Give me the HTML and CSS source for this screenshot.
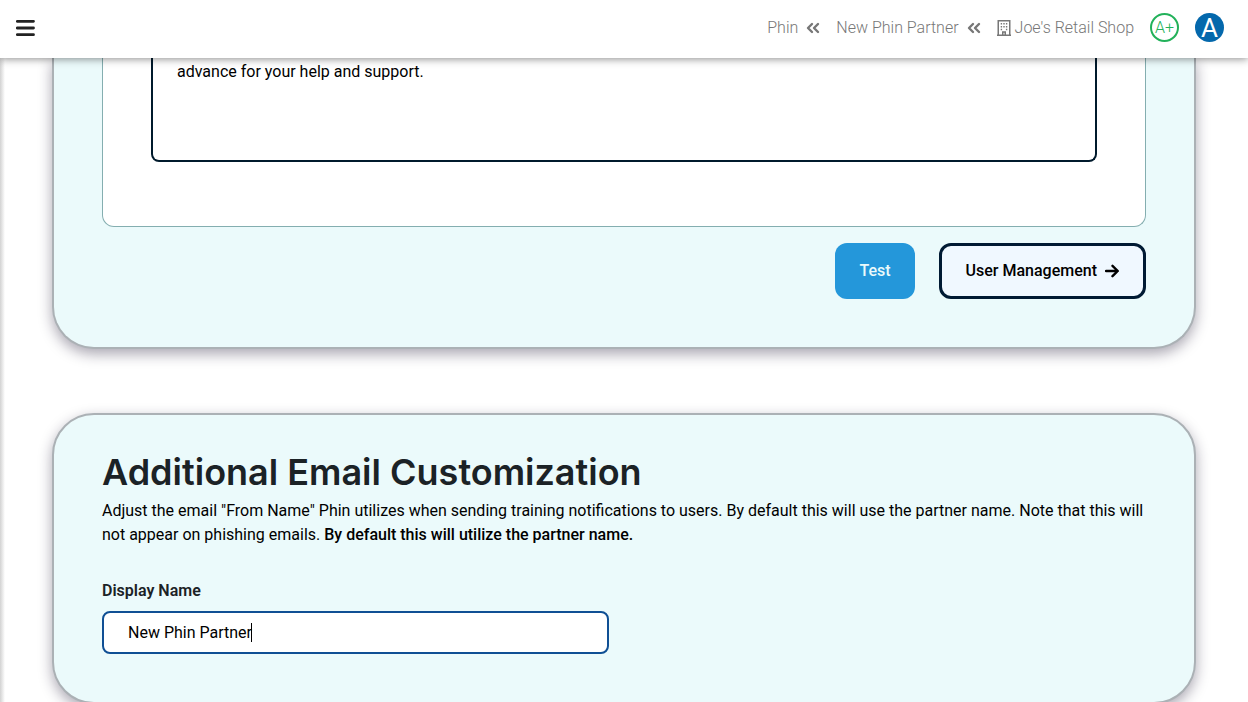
FILE: index.html
```html
<!DOCTYPE html>
<html lang="en">
<head>
    <meta charset="UTF-8">
    <meta name="viewport" content="width=device-width, initial-scale=1.0">
    <title>Joe's Retail Shop</title>
    <link rel="stylesheet" href="styles.css">
</head>
<body>
    <header class="topbar">
        <button class="menu-btn" type="button" aria-label="Menu">
            <svg width="20" height="18" viewBox="0 0 20 18"><path d="M1.300 2.300h16.200M1.300 9h16.200M1.300 15.700h16.200" stroke="#222" stroke-width="2.800" stroke-linecap="round"/></svg>
        </button>
        <nav class="breadcrumbs">
            <a href="#">Phin</a>
            <svg class="chevrons" width="14" height="12" viewBox="0 0 14 12"><path d="M6 2L2 6l4 4M12 2L8 6l4 4"/></svg>
            <a href="#">New Phin Partner</a>
            <svg class="chevrons" width="14" height="12" viewBox="0 0 14 12"><path d="M6 2L2 6l4 4M12 2L8 6l4 4"/></svg>
            <a class="company" href="#">
                <svg width="14" height="16" viewBox="0 0 14 16">
                    <path d="M0 15.250h14M1.250 15V.75h11.500V15M5.750 15v-3h2.500v3" fill="none" stroke="#777" stroke-width="1.500"/>
                    <path d="M3.700 3h1.400v1.500H3.700zM6.300 3h1.400v1.500H6.300zM8.900 3h1.400v1.500H8.900zM3.700 5.900h1.400v1.500H3.700zM6.300 5.900h1.400v1.500H6.300zM8.900 5.900h1.400v1.500H8.900zM3.700 8.800h1.400v1.500H3.700zM8.900 8.800h1.400v1.500H8.900z" fill="#777"/>
                </svg>
                Joe's Retail Shop
            </a>
        </nav>
        <span class="grade">A+</span>
        <button class="avatar" type="button">A</button>
    </header>

    <main class="content">
        <section class="card card-first">
            <div class="panel">
                <textarea class="editor" rows="4" aria-label="Email message">advance for your help and support.</textarea>
            </div>
            <div class="actions">
                <button class="btn btn-test" type="button">Test</button>
                <button class="btn btn-outline" type="button">
                    User Management
                    <svg width="14" height="14" viewBox="0 0 14 14"><path d="M1 7h11.500M7.500 1.800L12.800 7l-5.300 5.200" fill="none" stroke="#000" stroke-width="2.400" stroke-linecap="round" stroke-linejoin="round"/></svg>
                </button>
            </div>
        </section>

        <section class="card">
            <h1>Additional Email Customization</h1>
            <p>Adjust the email "From Name" Phin utilizes when sending training notifications to users. By default this will use the partner name. Note that this will not appear on phishing emails. <strong>By default this will utilize the partner name.</strong></p>
            <div class="form-grid">
                <div class="field">
                    <label for="display-name">Display Name</label>
                    <div class="input-wrap">
                        <input type="text" id="display-name" value="New Phin Partner">
                        <span class="caret"></span>
                    </div>
                </div>
            </div>
        </section>
    </main>
</body>
</html>
```
FILE: styles.css
```css
* {
    box-sizing: border-box;
}
body {
    margin: 0;
    height: 100vh;
    display: flex;
    flex-direction: column;
    overflow: hidden;
    background-color: #fff;
    color: #000;
    font-family: Roboto, sans-serif;
    font-size: 16px;
    line-height: 24px;
}
button, input, textarea {
    font: inherit;
    color: inherit;
}
button {
    cursor: pointer;
}

/* Top bar */
.topbar {
    position: relative;
    z-index: 1;
    flex: none;
    display: flex;
    align-items: center;
    height: 58px;
    padding: 0 24px 3px 16px;
    background-color: #fff;
    box-shadow: 0 1px 8px rgba(0, 0, 0, 0.45);
}
.menu-btn {
    display: flex;
    padding: 1px 0 0;
    border: none;
    background: none;
}
.breadcrumbs {
    display: flex;
    align-items: center;
    margin-left: auto;
    padding-top: 1px;
    font-weight: 300;
}
.breadcrumbs a {
    color: #777;
    text-decoration: none;
}
.chevrons {
    margin: 0 16px 0 8px;
    fill: none;
    stroke: #777;
    stroke-width: 2.4;
    stroke-linecap: round;
    stroke-linejoin: round;
}
.company {
    display: flex;
    align-items: center;
    gap: 4px;
}
.grade, .avatar {
    display: flex;
    align-items: center;
    justify-content: center;
    width: 29px;
    height: 29px;
    margin-left: 16px;
    border-radius: 50%;
}
.grade {
    border: 2px solid #22b15a;
    color: #22b15a;
    font-weight: 300;
}
.avatar {
    padding: 0;
    border: none;
    background-color: #0468ac;
    color: #fff;
    font-size: 26px;
}

/* Page */
.content {
    flex: 1;
    min-height: 0;
    overflow: hidden;
    padding: 0 52px;
    background: linear-gradient(to right, #d2d2d2, #fff 5px);
}
.card {
    margin-bottom: 64px;
    padding: 34px 48px 48px;
    border: 2px solid #abb1b5;
    border-radius: 42px;
    background-color: #ebfafb;
    box-shadow: 0 5px 14px rgba(30, 20, 50, 0.38);
}
.card-first {
    padding-top: 0;
    border-top: none;
    border-radius: 0 0 42px 42px;
}
.panel {
    padding: 0 48px 64px;
    border: 1px solid #84aeb0;
    border-top: none;
    border-radius: 0 0 12px 12px;
    background-color: #fff;
}
.editor {
    display: block;
    width: 100%;
    height: 104px;
    padding: 2px 24px;
    border: 2px solid #001a2c;
    border-top: none;
    border-radius: 0 0 8px 8px;
    background-color: #fff;
    resize: none;
    outline: none;
}
.actions {
    display: flex;
    justify-content: flex-end;
    gap: 24px;
    margin-top: 16px;
}
.btn {
    display: flex;
    align-items: center;
    gap: 8px;
    height: 56px;
    padding: 0 24px;
    border: none;
    border-radius: 12px;
    font-weight: 500;
}
.btn-test {
    background-color: #2497da;
    color: #ebfafb;
}
.btn-outline {
    border: 3px solid #001a33;
    background-color: #f0f8ff;
}
h1 {
    margin: 0 0 4px;
    color: #1b2226;
    font-family: Inter, sans-serif;
    font-size: 36px;
    font-weight: 600;
    line-height: 46px;
}
p {
    margin: 0 0 32px;
}
strong {
    font-weight: 500;
}
.form-grid {
    display: grid;
    grid-template-columns: 1fr 1fr;
    gap: 30px;
}
.field label {
    display: block;
    margin-bottom: 8px;
    color: #1b2226;
    font-weight: 600;
}
.input-wrap {
    position: relative;
}
.field input {
    display: block;
    width: 100%;
    height: 43px;
    padding: 0 24px;
    border: 2px solid #0f4f94;
    border-radius: 8px;
    background-color: #fff;
    outline: none;
}
.caret {
    position: absolute;
    top: 12px;
    left: 149px;
    width: 1px;
    height: 19px;
    background-color: #000;
}
```
